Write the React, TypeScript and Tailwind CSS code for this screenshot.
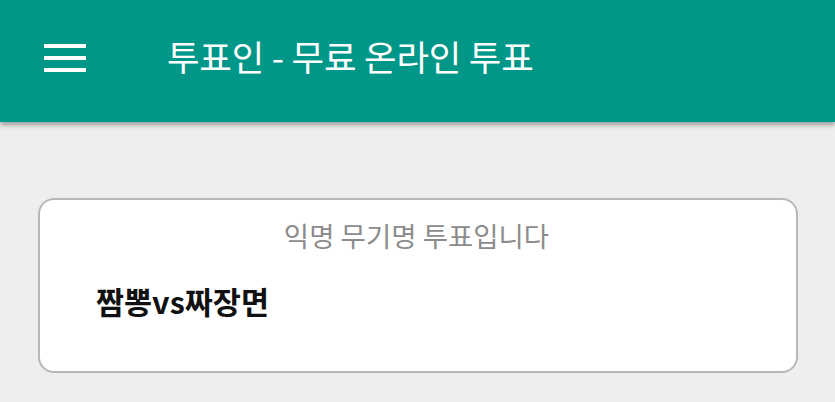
export default function App() {
  return (
    <div
      className="w-[835px] h-[402px] overflow-hidden bg-[#eeeeee]"
      style={{ fontFamily: '"Noto Sans CJK KR", "Noto Sans", sans-serif' }}
    >
      {/* app bar */}
      <header className="h-[122px] bg-[#009688] flex items-center shadow-[0_3px_5px_rgba(0,0,0,0.35)] relative z-10">
        <button className="ml-[44px] w-[42px] flex flex-col gap-[7.5px] mb-[6px]">
          <span className="block h-[4.5px] w-full bg-white" />
          <span className="block h-[4.5px] w-full bg-white" />
          <span className="block h-[4.5px] w-full bg-white" />
        </button>
        <h1 className="ml-[81px] text-white text-[35.4px] leading-none tracking-[-0.2px] pb-[11px]">
          투표인 - 무료 온라인 투표
        </h1>
      </header>

      <main className="px-[38px] pt-[76px]">
        <div className="h-[175px] w-[760px] bg-white border-2 border-[#b8b8b8] rounded-[16px] pt-[22px]">
          <p className="text-center text-[27.5px] leading-none text-[#8c8c8c] pr-[3px]">
            익명 무기명 투표입니다
          </p>
          <p className="mt-[36px] ml-[56px] text-[30.5px] leading-none font-bold text-[#111]">
            짬뽕vs짜장면
          </p>
        </div>
      </main>
    </div>
  );
}
